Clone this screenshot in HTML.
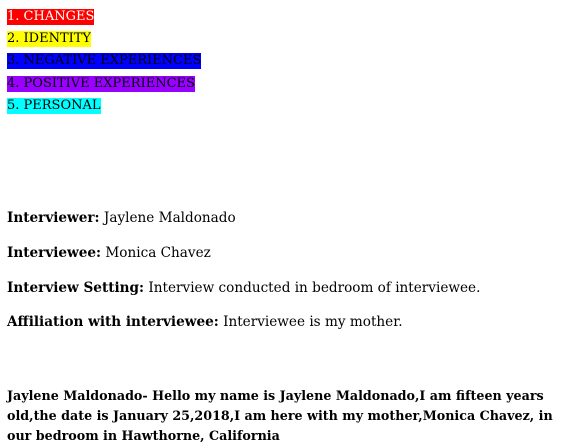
<!DOCTYPE html>
<html><head><style>
body{margin:0;background:#fff;font-family:"DejaVu Serif","Liberation Serif",serif;font-size:13px;color:#000;}
.l{position:absolute;left:7px;white-space:nowrap;}
.h{line-height:16px;display:inline-block;}
p{position:absolute;left:7px;margin:0;white-space:nowrap;font-size:13.6px;}
</style></head><body>
<div class="l" style="top:9px"><span class="h" style="background:#f00;color:#fff">1. CHANGES</span></div>
<div class="l" style="top:31px"><span class="h" style="background:#ff0">2. IDENTITY</span></div>
<div class="l" style="top:53px"><span class="h" style="background:#00f">3. NEGATIVE EXPERIENCES</span></div>
<div class="l" style="top:76px"><span class="h" style="background:#90f">4. POSITIVE EXPERIENCES</span></div>
<div class="l" style="top:98px"><span class="h" style="background:#0ff">5. PERSONAL</span></div>
<p style="top:210px"><b>Interviewer:</b> Jaylene Maldonado</p>
<p style="top:245px"><b>Interviewee:</b> Monica Chavez</p>
<p style="top:280px"><b>Interview Setting:</b> Interview conducted in bedroom of interviewee.</p>
<p style="top:314px"><b>Affiliation with interviewee:</b> Interviewee is my mother.</p>
<p style="top:386px;line-height:20px;font-weight:bold;font-size:12.7px;">Jaylene Maldonado- Hello my name is Jaylene Maldonado,I am fifteen years<br>old,the date is January 25,2018,I am here with my mother,Monica Chavez, in<br>our bedroom in Hawthorne, California</p>
</body></html>
